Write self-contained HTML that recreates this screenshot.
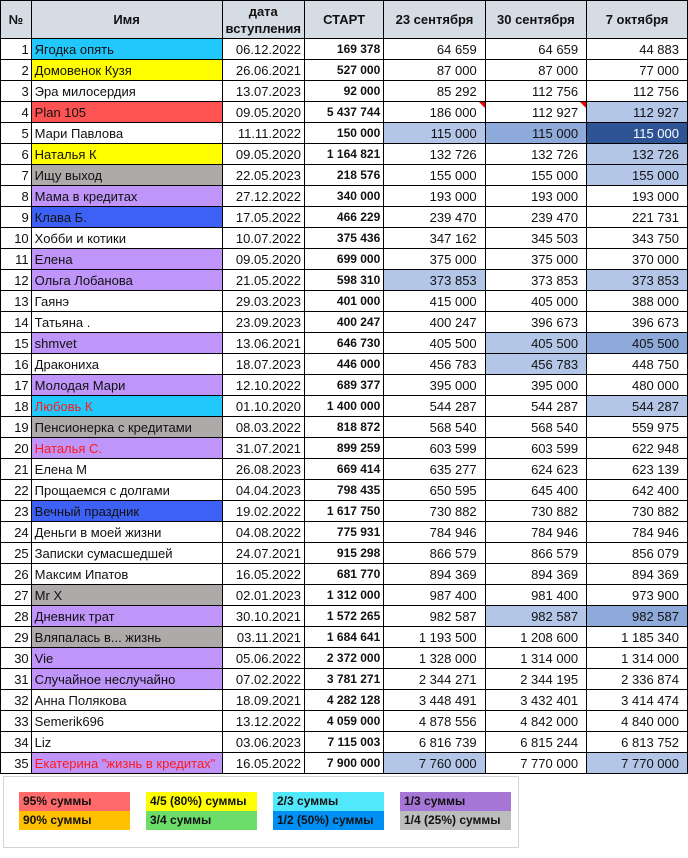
<!DOCTYPE html>
<html><head><meta charset="utf-8"><style>
body{margin:0;background:#fff;font-family:"Liberation Sans",Arial,sans-serif;}
table{border-collapse:collapse;table-layout:fixed;position:absolute;left:0;top:0;}
td,th{border:1px solid #000;height:20px;padding:0 3px;font-size:13px;white-space:nowrap;overflow:hidden;color:#111;}
th{background:#d6dce4;font-weight:bold;height:37px;text-align:center;font-size:13px;line-height:17px;}
td.n{text-align:right;padding:0 2px}
td.d{text-align:right}
td.s{text-align:right;font-weight:bold;font-size:12px}
td.v{text-align:right;padding-right:8px}
.cy{background:#22c7fb}.ye{background:#ffff00}.re{background:#ff5252}.gr{background:#aeaaaa}.pu{background:#bf95f9}.bl{background:#3d61f5}
.rt{color:#ff1a1a}
.l{background:#b4c6e7}.m{background:#8eaadb}.k{background:#2f5496;color:#fff}
.tri{position:relative}
.tri:after{content:"";position:absolute;right:0;top:0;border-top:6px solid #e00;border-left:6px solid transparent}
.leg{position:absolute;left:3px;top:776px;width:514px;height:70px;border:1px solid #d4d4d4;}
.lg{position:absolute;height:19px;font-size:12px;font-weight:bold;line-height:19px;padding-left:4px;box-sizing:border-box;width:111px;color:#111}
</style></head><body>
<table>
<colgroup><col style="width:31px"><col style="width:191px"><col style="width:80px"><col style="width:80px"><col style="width:102px"><col style="width:102px"><col style="width:102px"></colgroup>
<tr><th>№</th><th>Имя</th><th>дата<br>вступления</th><th>СТАРТ</th><th>23 сентября</th><th>30 сентября</th><th>7 октября</th></tr>
<tr><td class="n">1</td><td class="cy">Ягодка опять</td><td class="d">06.12.2022</td><td class="s">169 378</td><td class="v">64 659</td><td class="v">64 659</td><td class="v">44 883</td></tr>
<tr><td class="n">2</td><td class="ye">Домовенок Кузя</td><td class="d">26.06.2021</td><td class="s">527 000</td><td class="v">87 000</td><td class="v">87 000</td><td class="v">77 000</td></tr>
<tr><td class="n">3</td><td>Эра милосердия</td><td class="d">13.07.2023</td><td class="s">92 000</td><td class="v">85 292</td><td class="v">112 756</td><td class="v">112 756</td></tr>
<tr><td class="n">4</td><td class="re">Plan 105</td><td class="d">09.05.2020</td><td class="s">5 437 744</td><td class="v tri">186 000</td><td class="v tri">112 927</td><td class="v l">112 927</td></tr>
<tr><td class="n">5</td><td>Мари Павлова</td><td class="d">11.11.2022</td><td class="s">150 000</td><td class="v l">115 000</td><td class="v m">115 000</td><td class="v k">115 000</td></tr>
<tr><td class="n">6</td><td class="ye">Наталья К</td><td class="d">09.05.2020</td><td class="s">1 164 821</td><td class="v">132 726</td><td class="v">132 726</td><td class="v l">132 726</td></tr>
<tr><td class="n">7</td><td class="gr">Ищу выход</td><td class="d">22.05.2023</td><td class="s">218 576</td><td class="v">155 000</td><td class="v">155 000</td><td class="v l">155 000</td></tr>
<tr><td class="n">8</td><td class="pu">Мама в кредитах</td><td class="d">27.12.2022</td><td class="s">340 000</td><td class="v">193 000</td><td class="v">193 000</td><td class="v">193 000</td></tr>
<tr><td class="n">9</td><td class="bl">Клава Б.</td><td class="d">17.05.2022</td><td class="s">466 229</td><td class="v">239 470</td><td class="v">239 470</td><td class="v">221 731</td></tr>
<tr><td class="n">10</td><td>Хобби и котики</td><td class="d">10.07.2022</td><td class="s">375 436</td><td class="v">347 162</td><td class="v">345 503</td><td class="v">343 750</td></tr>
<tr><td class="n">11</td><td class="pu">Елена</td><td class="d">09.05.2020</td><td class="s">699 000</td><td class="v">375 000</td><td class="v">375 000</td><td class="v">370 000</td></tr>
<tr><td class="n">12</td><td class="pu">Ольга Лобанова</td><td class="d">21.05.2022</td><td class="s">598 310</td><td class="v l">373 853</td><td class="v">373 853</td><td class="v l">373 853</td></tr>
<tr><td class="n">13</td><td>Гаянэ</td><td class="d">29.03.2023</td><td class="s">401 000</td><td class="v">415 000</td><td class="v">405 000</td><td class="v">388 000</td></tr>
<tr><td class="n">14</td><td>Татьяна .</td><td class="d">23.09.2023</td><td class="s">400 247</td><td class="v">400 247</td><td class="v">396 673</td><td class="v">396 673</td></tr>
<tr><td class="n">15</td><td class="pu">shmvet</td><td class="d">13.06.2021</td><td class="s">646 730</td><td class="v">405 500</td><td class="v l">405 500</td><td class="v m">405 500</td></tr>
<tr><td class="n">16</td><td>Дракониха</td><td class="d">18.07.2023</td><td class="s">446 000</td><td class="v">456 783</td><td class="v l">456 783</td><td class="v">448 750</td></tr>
<tr><td class="n">17</td><td class="pu">Молодая Мари</td><td class="d">12.10.2022</td><td class="s">689 377</td><td class="v">395 000</td><td class="v">395 000</td><td class="v">480 000</td></tr>
<tr><td class="n">18</td><td class="cy rt">Любовь К</td><td class="d">01.10.2020</td><td class="s">1 400 000</td><td class="v">544 287</td><td class="v">544 287</td><td class="v l">544 287</td></tr>
<tr><td class="n">19</td><td class="gr">Пенсионерка с кредитами</td><td class="d">08.03.2022</td><td class="s">818 872</td><td class="v">568 540</td><td class="v">568 540</td><td class="v">559 975</td></tr>
<tr><td class="n">20</td><td class="pu rt">Наталья С.</td><td class="d">31.07.2021</td><td class="s">899 259</td><td class="v">603 599</td><td class="v">603 599</td><td class="v">622 948</td></tr>
<tr><td class="n">21</td><td>Елена М</td><td class="d">26.08.2023</td><td class="s">669 414</td><td class="v">635 277</td><td class="v">624 623</td><td class="v">623 139</td></tr>
<tr><td class="n">22</td><td>Прощаемся с долгами</td><td class="d">04.04.2023</td><td class="s">798 435</td><td class="v">650 595</td><td class="v">645 400</td><td class="v">642 400</td></tr>
<tr><td class="n">23</td><td class="bl">Вечный праздник</td><td class="d">19.02.2022</td><td class="s">1 617 750</td><td class="v">730 882</td><td class="v">730 882</td><td class="v">730 882</td></tr>
<tr><td class="n">24</td><td>Деньги в моей жизни</td><td class="d">04.08.2022</td><td class="s">775 931</td><td class="v">784 946</td><td class="v">784 946</td><td class="v">784 946</td></tr>
<tr><td class="n">25</td><td>Записки сумасшедшей</td><td class="d">24.07.2021</td><td class="s">915 298</td><td class="v">866 579</td><td class="v">866 579</td><td class="v">856 079</td></tr>
<tr><td class="n">26</td><td>Максим Ипатов</td><td class="d">16.05.2022</td><td class="s">681 770</td><td class="v">894 369</td><td class="v">894 369</td><td class="v">894 369</td></tr>
<tr><td class="n">27</td><td class="gr">Mr X</td><td class="d">02.01.2023</td><td class="s">1 312 000</td><td class="v">987 400</td><td class="v">981 400</td><td class="v">973 900</td></tr>
<tr><td class="n">28</td><td class="pu">Дневник трат</td><td class="d">30.10.2021</td><td class="s">1 572 265</td><td class="v">982 587</td><td class="v l">982 587</td><td class="v m">982 587</td></tr>
<tr><td class="n">29</td><td class="gr">Вляпалась в... жизнь</td><td class="d">03.11.2021</td><td class="s">1 684 641</td><td class="v">1 193 500</td><td class="v">1 208 600</td><td class="v">1 185 340</td></tr>
<tr><td class="n">30</td><td class="pu">Vie</td><td class="d">05.06.2022</td><td class="s">2 372 000</td><td class="v">1 328 000</td><td class="v">1 314 000</td><td class="v">1 314 000</td></tr>
<tr><td class="n">31</td><td class="pu">Случайное неслучайно</td><td class="d">07.02.2022</td><td class="s">3 781 271</td><td class="v">2 344 271</td><td class="v">2 344 195</td><td class="v">2 336 874</td></tr>
<tr><td class="n">32</td><td>Анна Полякова</td><td class="d">18.09.2021</td><td class="s">4 282 128</td><td class="v">3 448 491</td><td class="v">3 432 401</td><td class="v">3 414 474</td></tr>
<tr><td class="n">33</td><td>Semerik696</td><td class="d">13.12.2022</td><td class="s">4 059 000</td><td class="v">4 878 556</td><td class="v">4 842 000</td><td class="v">4 840 000</td></tr>
<tr><td class="n">34</td><td>Liz</td><td class="d">03.06.2023</td><td class="s">7 115 003</td><td class="v">6 816 739</td><td class="v">6 815 244</td><td class="v">6 813 752</td></tr>
<tr><td class="n">35</td><td class="pu rt">Екатерина "жизнь в кредитах"</td><td class="d">16.05.2022</td><td class="s">7 900 000</td><td class="v l">7 760 000</td><td class="v">7 770 000</td><td class="v l">7 770 000</td></tr>
</table>
<div class="leg"></div>
<div class="lg" style="left:19px;top:792px;background:#ff6b6b">95% суммы</div>
<div class="lg" style="left:19px;top:811px;background:#ffc000">90% суммы</div>
<div class="lg" style="left:146px;top:792px;background:#ffff00">4/5 (80%) суммы</div>
<div class="lg" style="left:146px;top:811px;background:#6ddd6a">3/4 суммы</div>
<div class="lg" style="left:273px;top:792px;background:#52e8fb">2/3 суммы</div>
<div class="lg" style="left:273px;top:811px;background:#0090f5">1/2 (50%) суммы</div>
<div class="lg" style="left:400px;top:792px;background:#a676d6">1/3 суммы</div>
<div class="lg" style="left:400px;top:811px;background:#bdbdbd">1/4 (25%) суммы</div>
</body></html>
